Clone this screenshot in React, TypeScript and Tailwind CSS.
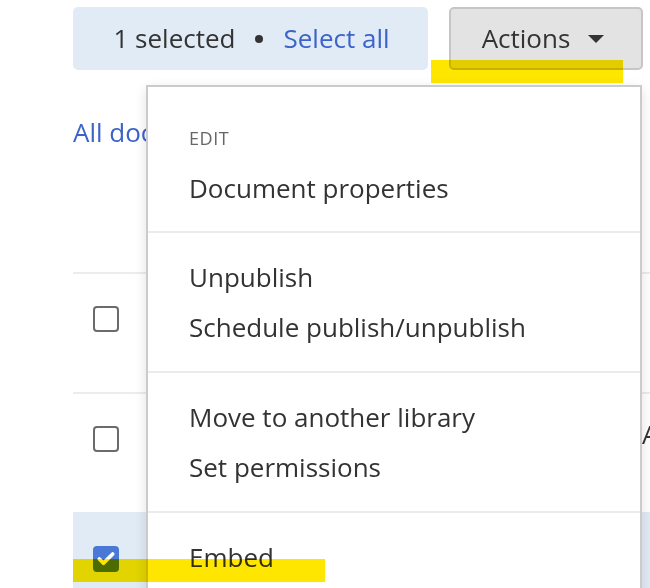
import { Check } from "lucide-react"

const groups = [
  { header: "EDIT", items: ["Document properties"] },
  { items: ["Unpublish", "Schedule publish/unpublish"] },
  { items: ["Move to another library", "Set permissions"] },
  { items: ["Embed"] },
]

function Checkbox({ checked }: { checked?: boolean }) {
  if (checked) {
    return (
      <div className="flex h-[26px] w-[26px] shrink-0 items-center justify-center rounded-[4px] bg-[#4a78d6]">
        <Check className="h-[20px] w-[20px] text-white" strokeWidth={4.5} />
      </div>
    )
  }
  return <div className="h-[26px] w-[26px] shrink-0 rounded-[4px] border-2 border-[#6b6b6b] bg-white" />
}

export default function App() {
  return (
    <div className="relative h-[588px] w-[650px] overflow-hidden bg-white font-['Open_Sans',sans-serif] text-[#333]">
      <div className="w-[760px] pl-[73px] pt-[7px]">
        <div className="flex items-start">
          <div className="flex h-[63px] w-[355px] items-center justify-center rounded-[5px] bg-[#e1ebf5] pl-[2px] text-[26px]">
            <span>1 selected</span>
            <span className="mx-[20px] h-[8px] w-[8px] rounded-full bg-[#333]" />
            <span className="text-[#3b63c9]">Select all</span>
          </div>
          <button className="ml-[21px] flex h-[63px] w-[194px] items-center justify-center gap-[18px] rounded-[5px] border-2 border-[#c6c6c6] bg-[#e3e3e3] pr-[6px] text-[26px] text-[#333]">
            <span>Actions</span>
            <span className="h-0 w-0 border-x-[8px] border-t-[8px] border-x-transparent border-t-[#333]" />
          </button>
        </div>

        <div className="mt-[42px] whitespace-nowrap text-[26px] leading-[40px] text-[#3b63c9]">All documents</div>

        <div className="mt-[120px]">
          <div className="h-[120px] border-t-2 border-[#ececec] pl-[20px] pt-[32px]">
            <div className="flex h-[26px] items-center">
              <Checkbox />
            </div>
          </div>
          <div className="h-[120px] border-t-2 border-[#ececec] pl-[20px] pt-[32px]">
            <div className="flex h-[26px] items-center">
              <Checkbox />
              <span className="ml-[523px] -translate-y-[5px] whitespace-nowrap text-[26px]">Annual report</span>
            </div>
          </div>
          <div className="h-[120px] border-t-2 border-[#e1ebf5] bg-[#e1ebf5] pl-[20px] pt-[32px]">
            <div className="flex h-[26px] items-center">
              <Checkbox checked />
            </div>
          </div>
        </div>
      </div>

      <div className="absolute left-[146px] top-[85px] w-[496px] border-2 border-[#cbcbcb] bg-white shadow-[0_4px_12px_rgba(0,0,0,0.12)]">
        {groups.map((g, i) => (
          <div key={i} className={i > 0 ? "border-t-2 border-[#ebebeb] py-[19px]" : "pb-[18px] pt-[26px]"}>
            {g.header && (
              <div className="flex h-[50px] items-center pl-[41px] text-[18px] tracking-[0.03em] text-[#666]">{g.header}</div>
            )}
            {g.items.map((item) => (
              <div key={item} className="flex h-[50px] items-center whitespace-nowrap pl-[41px] text-[26px] text-[#333]">
                {item}
              </div>
            ))}
          </div>
        ))}
      </div>

      <div className="pointer-events-none absolute left-[431px] top-[60px] h-[23px] w-[192px] bg-[#ffe600] mix-blend-multiply" />
      <div className="pointer-events-none absolute left-[73px] top-[559px] h-[23px] w-[252px] bg-[#ffe600] mix-blend-multiply" />
    </div>
  )
}
